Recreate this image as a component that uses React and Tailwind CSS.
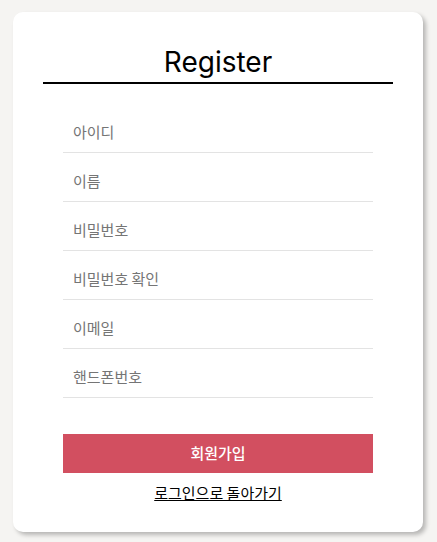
import React from 'react';

const fields = [
  { name: 'userId', placeholder: '아이디', type: 'text' },
  { name: 'name', placeholder: '이름', type: 'text' },
  { name: 'password', placeholder: '비밀번호', type: 'password' },
  { name: 'passwordCheck', placeholder: '비밀번호 확인', type: 'password' },
  { name: 'email', placeholder: '이메일', type: 'email' },
  { name: 'phone', placeholder: '핸드폰번호', type: 'text' },
];

const App = () => {
  return (
    <div className="min-h-screen bg-[#f5f4f2] pt-[12px] pl-[13px] font-['Noto_Sans','Noto_Sans_CJK_KR',sans-serif]">
      <div className="w-[410px] h-[520px] bg-white rounded-[10px] shadow-[3px_3px_4px_rgba(0,0,0,0.25)] px-[30px] pt-[33px]">
        <h1 className="text-center text-[28px] leading-[34px] text-black font-['Inter','Noto_Sans',sans-serif] pb-[3px]">
          Register
        </h1>
        <div className="h-[2px] bg-black" />

        <form className="px-[20px] pt-[20px]" onSubmit={(e) => e.preventDefault()}>
          {fields.map((f) => (
            <input
              key={f.name}
              name={f.name}
              type={f.type}
              placeholder={f.placeholder}
              className="block w-full h-[49px] px-[10px] pt-[6px] border-b border-[#e3e3e3] text-[15px] text-[#333] placeholder:text-[#757575] outline-none font-['Noto_Sans_CJK_KR',sans-serif]"
            />
          ))}

          <button
            type="submit"
            className="mt-[36px] w-full h-[39px] bg-[#d24f60] text-white text-[15px] font-medium font-['Noto_Sans_CJK_KR',sans-serif]"
          >
            회원가입
          </button>
          <div className="text-center mt-[8px]">
            <a href="#" className="text-[15px] text-black underline font-['Noto_Sans_CJK_KR',sans-serif]">
              로그인으로 돌아가기
            </a>
          </div>
        </form>
      </div>
    </div>
  );
};

export default App;
